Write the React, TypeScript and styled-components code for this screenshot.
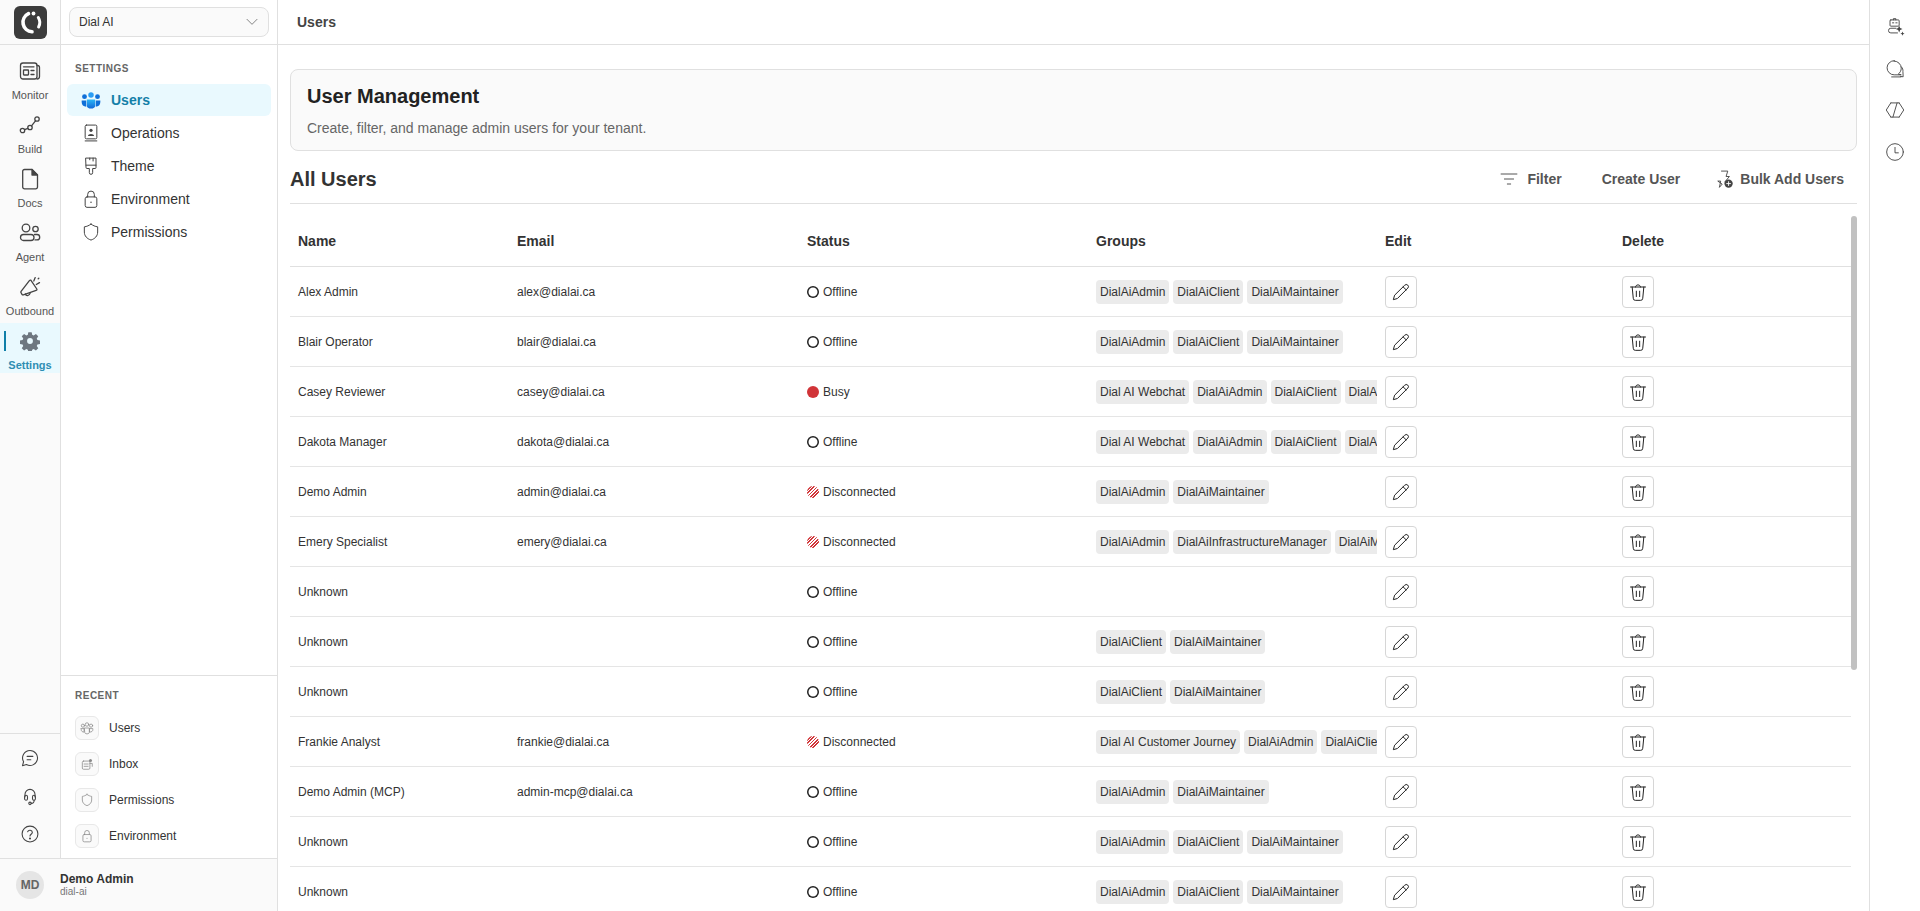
import React from 'react';
import styled, { createGlobalStyle } from 'styled-components';

const GlobalStyle = createGlobalStyle`
  html, body, #root {
    height: 100%;
  }
  body {
    margin: 0;
    overflow: hidden;
    background: #fff;
    color: #333;
    font-family: "Liberation Sans", Arial, sans-serif;
  }
  * {
    box-sizing: border-box;
  }
`;

type Status = 'Offline' | 'Busy' | 'Disconnected';
type User = { name: string; email: string; status: Status; groups: string[] };

const ADMIN = 'DialAiAdmin';
const CLIENT = 'DialAiClient';
const MAINT = 'DialAiMaintainer';
const WEBCHAT = 'Dial AI Webchat';

const users: User[] = [
  { name: 'Alex Admin', email: 'alex@dialai.ca', status: 'Offline', groups: [ADMIN, CLIENT, MAINT] },
  { name: 'Blair Operator', email: 'blair@dialai.ca', status: 'Offline', groups: [ADMIN, CLIENT, MAINT] },
  { name: 'Casey Reviewer', email: 'casey@dialai.ca', status: 'Busy', groups: [WEBCHAT, ADMIN, CLIENT, MAINT] },
  { name: 'Dakota Manager', email: 'dakota@dialai.ca', status: 'Offline', groups: [WEBCHAT, ADMIN, CLIENT, MAINT] },
  { name: 'Demo Admin', email: 'admin@dialai.ca', status: 'Disconnected', groups: [ADMIN, MAINT] },
  { name: 'Emery Specialist', email: 'emery@dialai.ca', status: 'Disconnected', groups: [ADMIN, 'DialAiInfrastructureManager', MAINT] },
  { name: 'Unknown', email: '', status: 'Offline', groups: [] },
  { name: 'Unknown', email: '', status: 'Offline', groups: [CLIENT, MAINT] },
  { name: 'Unknown', email: '', status: 'Offline', groups: [CLIENT, MAINT] },
  { name: 'Frankie Analyst', email: 'frankie@dialai.ca', status: 'Disconnected', groups: ['Dial AI Customer Journey', ADMIN, CLIENT, MAINT] },
  { name: 'Demo Admin (MCP)', email: 'admin-mcp@dialai.ca', status: 'Offline', groups: [ADMIN, MAINT] },
  { name: 'Unknown', email: '', status: 'Offline', groups: [ADMIN, CLIENT, MAINT] },
  { name: 'Unknown', email: '', status: 'Offline', groups: [ADMIN, CLIENT, MAINT] },
];

const Glyph = styled.svg<{ $size?: number }>`
  width: ${(p) => p.$size ?? 24}px;
  height: ${(p) => p.$size ?? 24}px;
  flex-shrink: 0;
  fill: none;
  stroke: currentColor;
  stroke-width: 1.3;
  stroke-linecap: round;
  stroke-linejoin: round;
`;

type IconProps = { size?: number };
const make = (body: React.ReactNode) => ({ size }: IconProps) => (
  <Glyph $size={size} viewBox="0 0 24 24">
    {body}
  </Glyph>
);

const MonitorIcon = make(
  <>
    <rect x="2.5" y="4" width="16.5" height="16" rx="2.5" />
    <path d="M19 6.5h.5a2 2 0 0 1 2 2v9a2.5 2.5 0 0 1-2.5 2.5" />
    <path d="M5.5 7.8h10.5M13 11.5h3M13 15.5h3" />
    <rect x="5.5" y="11" width="5" height="5" rx=".5" />
  </>
);
const BuildIcon = make(
  <>
    <circle cx="4.5" cy="17.5" r="2.2" />
    <circle cx="12" cy="14.5" r="2.2" />
    <circle cx="19" cy="6" r="2.2" />
    <path d="M6.6 16.7l3.3-1.4M13.5 12.8l4-5" />
  </>
);
const DocsIcon = make(
  <>
    <path d="M6.5 2.5h7.5l5.5 5.5v12a1.8 1.8 0 0 1-1.8 1.8H6.5A1.8 1.8 0 0 1 4.7 20V4.3a1.8 1.8 0 0 1 1.8-1.8z" />
    <path d="M14 2.5V8h5.5z" fill="currentColor" />
  </>
);
const AgentIcon = make(
  <>
    <circle cx="8" cy="7" r="3.8" />
    <circle cx="17.5" cy="8" r="2.7" />
    <rect x="2.5" y="13.5" width="13.5" height="6" rx="3" />
    <path d="M16.5 13.5H19a2.6 2.6 0 0 1 0 5.4h-2" />
  </>
);
const OutboundIcon = make(
  <>
    <path d="M12.8 5.2l6 8.8c.4.7 0 1.3-.7 1.3L5.4 19.8c-.6.2-1.1 0-1.4-.5l-1-1.6c-.3-.5-.2-1 .1-1.4l8.3-10.7c.5-.6 1-.6 1.4-.4z" />
    <path d="M7.5 18.8c.3 2.3 3.8 2.6 4.8-.9" />
    <path d="M15.8 6l1.4-3.4M18.3 9.500l3.200-1.900M20.200 3.800l.6-.6" />
  </>
);
const GearIcon = ({ size }: IconProps) => (
  <Glyph $size={size} viewBox="0 0 24 24" style={{ stroke: 'none' }}>
    <path
      fill="#6e7780"
      fillRule="evenodd"
      d="M10 1.5h4l.6 3.1 1.8.8 2.7-1.8 2.800 2.800-1.800 2.700.8 1.800 3.100.6v4l-3.100.6-.8 1.800 1.800 2.700-2.800 2.800-2.700-1.800-1.800.8-.6 3.100h-4l-.6-3.100-1.800-.8-2.700 1.800-2.800-2.800 1.800-2.700-.8-1.800-3.100-.6v-4l3.100-.6.8-1.800-1.800-2.700 2.800-2.800 2.700 1.800 1.800-.8zM12 8.500a3.500 3.500 0 1 0 0 7 3.500 3.500 0 0 0 0-7z"
    />
  </Glyph>
);
const UsersColorIcon = ({ size }: IconProps) => (
  <Glyph $size={size} viewBox="0 0 24 24" style={{ stroke: 'none' }}>
    <defs>
      <linearGradient id="users-body" x1="0" y1="0" x2="0" y2="1">
        <stop offset="0" stopColor="#2ab6f6" />
        <stop offset="1" stopColor="#1167d8" />
      </linearGradient>
    </defs>
    <circle cx="4.2" cy="8" r="2.9" fill="#0f6fd8" />
    <circle cx="19.8" cy="8" r="2.9" fill="#0f6fd8" />
    <circle cx="12" cy="6" r="3.3" fill="#2a9df4" />
    <path d="M.8 12.5h5.500v7.500c-3.300 0-5.500-2-5.500-5.500zM17.700 12.500h5.500v2c0 3.500-2.200 5.500-5.500 5.500z" fill="#0f6fd8" />
    <path d="M7 11.500h10v7c0 2.500-2 3.800-5 3.800s-5-1.300-5-3.800z" fill="url(#users-body)" />
  </Glyph>
);
const OperationsIcon = make(
  <>
    <rect x="5" y="2.5" width="14" height="16.5" rx="1.5" />
    <path d="M5 21.5h14" />
    <circle cx="12" cy="8.8" r="1.9" fill="currentColor" stroke="none" />
    <path d="M8.3 15.5c0-3.200 7.400-3.200 7.400 0z" fill="currentColor" stroke="none" />
  </>
);
const ThemeIcon = make(
  <>
    <path d="M6 2.5h12v11.500a1 1 0 0 1-1 1h-3v5a2 2 0 0 1-4 0v-5H7a1 1 0 0 1-1-1z" />
    <path d="M6 11h12M14.500 2.500v3.500M10.500 2.500v2" />
  </>
);
const LockIcon = make(
  <>
    <rect x="5" y="9.5" width="14" height="12.5" rx="2.2" />
    <path d="M8 9.500V6.500a4 4 0 0 1 8 0v3" />
    <circle cx="12" cy="15.8" r=".9" fill="currentColor" stroke="none" />
  </>
);
const ShieldIcon = make(
  <path d="M12 2.500c2.400 1.800 5 2.900 8 3.300v6.200c0 4.800-3.200 8-8 9.700-4.800-1.700-8-4.900-8-9.700V5.800c3-.4 5.600-1.500 8-3.300z" />
);
const ChatIcon = make(
  <>
    <path d="M12 3a9 9 0 1 1-4.300 16.900L3 21.200l1.300-4.700A9 9 0 0 1 12 3z" />
    <path d="M8.500 10h7M8.500 14h4.500" />
  </>
);
const HeadsetIcon = make(
  <>
    <path d="M6 13v-3a6 6 0 0 1 12 0v3" />
    <rect x="5.5" y="11" width="3.5" height="6" rx="1.75" />
    <rect x="15" y="11" width="3.5" height="6" rx="1.75" />
    <path d="M17 17c0 2.500-1.500 3.800-3.500 3.800" />
    <circle cx="12" cy="20.8" r="1.5" />
  </>
);
const HelpIcon = make(
  <>
    <circle cx="12" cy="12" r="9.5" />
    <path d="M9.200 9.300a2.900 2.900 0 0 1 5.600.8c0 1.900-2.800 2.400-2.800 4.200" />
    <circle cx="12" cy="17.3" r=".6" fill="currentColor" />
  </>
);
const PeopleIcon = make(
  <>
    <circle cx="5" cy="8" r="2.7" />
    <circle cx="19" cy="8" r="2.7" />
    <circle cx="12" cy="6" r="3" />
    <path d="M2 13h5v6c-3 0-5-1.500-5-4zM17 13h5v2c0 2.500-2 4-5 4zM8 12h8v7c0 2-1.500 3-4 3s-4-1-4-3z" />
  </>
);
const InboxIcon = make(
  <>
    <rect x="4" y="7" width="13" height="14" rx="2" />
    <path d="M7 12h7M7 16h7" />
    <circle cx="18" cy="6" r="2.6" fill="currentColor" stroke="none" />
    <path d="M17 11h4v5" />
  </>
);
const ChevronIcon = make(<path d="M4.500 8l7.500 7.500L19.500 8" />);
const FilterIcon = make(<path d="M2.500 6h19M6.500 12h11M10 18h4" />);
const BulkIcon = make(
  <>
    <path d="M9 2.500h7.500l-2 6.500h4L13 15.500M9.500 18.500L6.500 22 8 14.500H5z" />
    <circle cx="17.500" cy="17.500" r="5" fill="currentColor" stroke="none" />
    <path d="M17.500 15.200v4.600M15.200 17.500h4.600" stroke="#fff" />
  </>
);
const PencilIcon = make(
  <>
    <path d="M16.500 3.800a2.300 2.300 0 0 1 3.700 3.500L7.700 19.800 2.800 21.200l1.400-4.900z" />
    <path d="M14.500 5.800l3.700 3.600" />
  </>
);
const TrashIcon = make(
  <>
    <path d="M3 6h18M9 6c0-3.500 6-3.500 6 0" />
    <path d="M5 6l1.300 13.500A2.500 2.500 0 0 0 8.800 22h6.400a2.500 2.500 0 0 0 2.500-2.500L19 6" />
    <path d="M10 11v6.500M14 11v6.500" />
  </>
);
const BotSparkIcon = make(
  <>
    <rect x="6" y="3.5" width="11" height="7.5" rx="1" />
    <path d="M10 3.500V2h3v1.500M9 7h1.500M13 7h1.500" />
    <path d="M13 13.500H7a2.800 2.800 0 0 0 0 5.600h8" />
    <path d="M17 10.500l1.200 2.800 2.800 1.200-2.800 1.200-1.200 2.800-1.200-2.800-2.800-1.200 2.800-1.200z" fill="currentColor" stroke="none" />
    <path d="M21 17.500l.7 1.800 1.800.7-1.800.7-.7 1.800-.7-1.800-1.800-.7 1.800-.7z" fill="currentColor" stroke="none" />
  </>
);
const ChatsIcon = make(
  <>
    <path d="M11 2.500a8.500 8.500 0 0 1 8.500 8.500c0 3-1.500 5.500-3.500 7l3.500 1H11a8.500 8.500 0 0 1 0-17z" />
    <path d="M19.800 9.500c1.300 1.500 2 3.500 1.700 5.500l.3 6.300-3-.3M8 21.500h11" />
  </>
);
const CodeIcon = make(
  <>
    <path d="M7 3.500l-5.500 8.500L7 20.500M17 3.500l5.500 8.500-5.500 8.500" />
    <path d="M14.500 3.500l-5 17M7 3.500h10M7 20.500h10" />
  </>
);
const ClockIcon = make(
  <>
    <circle cx="12" cy="12" r="10" />
    <path d="M12 6.500V13h4" />
  </>
);

const Logo = () => (
  <LogoMark viewBox="0 0 33 33">
    <rect width="33" height="33" rx="6" fill="#3c3c3c" />
    <path d="M14.500 7.700A9.500 9.500 0 0 0 18 25.800" stroke="#fff" strokeWidth="3.6" fill="none" strokeLinecap="round" />
    <path d="M24.300 11.500a9.500 9.500 0 0 1 .3 9.500" stroke="#fff" strokeWidth="3" fill="none" strokeLinecap="round" />
    <circle cx="19.500" cy="7.500" r="1.9" fill="#fff" />
  </LogoMark>
);

const Shell = styled.div`
  display: flex;
  height: 100vh;
`;

const LeftPanel = styled.aside`
  width: 278px;
  flex-shrink: 0;
  display: flex;
  flex-direction: column;
  border-right: 1px solid #e0e0e0;
`;

const PanelBody = styled.div`
  flex: 1;
  min-height: 0;
  display: flex;
`;

const Rail = styled.div`
  width: 61px;
  flex-shrink: 0;
  display: flex;
  flex-direction: column;
  background: #fafafa;
  border-right: 1px solid #e0e0e0;
`;

const LogoRow = styled.div`
  height: 45px;
  flex-shrink: 0;
  display: flex;
  justify-content: center;
  padding-top: 6px;
  padding-left: 1px;
  border-bottom: 1px solid #e0e0e0;
`;

const LogoMark = styled.svg`
  width: 33px;
  height: 33px;
`;

const RailNav = styled.nav`
  flex: 1;
  display: flex;
  flex-direction: column;
  gap: 4px;
  padding-top: 8px;
`;

const RailItem = styled.a<{ $active?: boolean }>`
  position: relative;
  height: 50px;
  display: flex;
  flex-direction: column;
  align-items: center;
  gap: 6px;
  padding-top: 6px;
  font-size: 11px;
  line-height: 12px;
  color: ${(p) => (p.$active ? '#2f8db3' : '#555')};
  font-weight: ${(p) => (p.$active ? 700 : 400)};
  background: ${(p) => (p.$active ? '#e9f9fe' : 'transparent')};
  ${(p) =>
    p.$active &&
    `&::before {
      content: '';
      position: absolute;
      left: 4px;
      top: 8px;
      width: 2px;
      height: 20px;
      background: #0f7fa8;
    }`}
`;

const RailIconSlot = styled.span`
  width: 24px;
  height: 24px;
  display: flex;
  align-items: center;
  justify-content: center;
  color: #444;
`;

const RailFooter = styled.div`
  height: 125px;
  flex-shrink: 0;
  display: flex;
  flex-direction: column;
  align-items: center;
  padding-top: 5px;
  border-top: 1px solid #e0e0e0;
`;

const RailTool = styled.button`
  width: 100%;
  height: 38px;
  display: flex;
  align-items: center;
  justify-content: center;
  padding: 0;
  border: 0;
  background: none;
  color: #444;
`;

const SidePanel = styled.div`
  flex: 1;
  min-width: 0;
  display: flex;
  flex-direction: column;
`;

const SelectRow = styled.div`
  height: 45px;
  flex-shrink: 0;
  padding: 7px 8px 0;
  border-bottom: 1px solid #e0e0e0;
`;

const TenantSelect = styled.div`
  height: 30px;
  display: flex;
  align-items: center;
  justify-content: space-between;
  padding: 0 8px 0 9px;
  font-size: 12px;
  color: #333;
  background: #fafafa;
  border: 1px solid #e0e0e0;
  border-radius: 8px;
  svg {
    color: #666;
    stroke-width: 1.2;
  }
`;

const SettingsNav = styled.nav`
  flex: 1;
  padding: 18px 6px 0;
`;

const SectionLabel = styled.div`
  font-size: 10px;
  line-height: 12px;
  font-weight: 700;
  letter-spacing: 0.5px;
  color: #666;
`;

const SettingsLabel = styled(SectionLabel)`
  padding-left: 8px;
  margin-bottom: 9px;
`;

const NavItem = styled.a<{ $active?: boolean }>`
  height: 32px;
  margin-bottom: 1px;
  display: flex;
  align-items: center;
  gap: 10px;
  padding-left: 14px;
  font-size: 14px;
  border-radius: 6px;
  color: ${(p) => (p.$active ? '#1480a8' : '#333')};
  font-weight: ${(p) => (p.$active ? 700 : 400)};
  background: ${(p) => (p.$active ? '#e9f9fe' : 'transparent')};
  svg {
    color: #444;
    stroke-width: 1.2;
  }
`;

const RecentSection = styled.div`
  flex-shrink: 0;
  padding: 14px 14px 4px;
  border-top: 1px solid #e0e0e0;
`;

const RecentLabel = styled(SectionLabel)`
  margin-bottom: 8px;
`;

const RecentItem = styled.a`
  height: 36px;
  display: flex;
  align-items: center;
  gap: 10px;
  font-size: 12px;
  color: #333;
`;

const RecentIconBox = styled.span`
  width: 24px;
  height: 24px;
  display: flex;
  align-items: center;
  justify-content: center;
  background: #fafafa;
  border: 1px solid #e8e8e8;
  border-radius: 6px;
  color: #8a8a8a;
`;

const UserFooter = styled.div`
  height: 53px;
  flex-shrink: 0;
  display: flex;
  align-items: center;
  gap: 16px;
  padding: 0 16px;
  background: #fafafa;
  border-top: 1px solid #e0e0e0;
`;

const Avatar = styled.span`
  width: 28px;
  height: 28px;
  display: flex;
  align-items: center;
  justify-content: center;
  border-radius: 50%;
  background: #e5e5e5;
  color: #666;
  font-size: 12px;
  font-weight: 700;
`;

const UserName = styled.div`
  font-size: 12px;
  line-height: 14px;
  font-weight: 700;
  color: #333;
`;

const UserTenant = styled.div`
  font-size: 10px;
  line-height: 12px;
  color: #777;
`;

const Main = styled.main`
  flex: 1;
  min-width: 0;
  display: flex;
  flex-direction: column;
`;

const PageHeader = styled.header`
  height: 45px;
  flex-shrink: 0;
  display: flex;
  align-items: center;
  padding-left: 19px;
  font-size: 14px;
  font-weight: 700;
  color: #444;
  border-bottom: 1px solid #e0e0e0;
`;

const Content = styled.div`
  flex: 1;
  min-height: 0;
  display: flex;
  flex-direction: column;
  padding: 24px 12px 0;
`;

const Banner = styled.section`
  flex-shrink: 0;
  padding: 14px 16px 10px;
  background: #fafafa;
  border: 1px solid #e0e0e0;
  border-radius: 8px;
`;

const BannerTitle = styled.h1`
  margin: 0 0 8px;
  font-size: 20px;
  line-height: 24px;
  font-weight: 700;
  color: #222;
`;

const BannerText = styled.p`
  margin: 0;
  font-size: 14px;
  line-height: 24px;
  color: #666;
`;

const Toolbar = styled.div`
  height: 53px;
  flex-shrink: 0;
  display: flex;
  align-items: center;
  justify-content: space-between;
  padding-top: 4px;
  margin-bottom: 12px;
  border-bottom: 1px solid #e0e0e0;
`;

const SectionTitle = styled.h2`
  margin: 0;
  font-size: 20px;
  font-weight: 700;
  color: #333;
`;

const Actions = styled.div`
  display: flex;
  gap: 16px;
  padding-right: 1px;
`;

const ActionButton = styled.button`
  height: 32px;
  display: flex;
  align-items: center;
  gap: 8px;
  padding: 0 12px;
  border: 0;
  background: none;
  font-family: inherit;
  font-size: 14px;
  font-weight: 700;
  color: #555;
  svg {
    color: #444;
    stroke-width: 1.1;
  }
`;

const BulkButton = styled(ActionButton)`
  gap: 6px;
  padding-left: 6px;
`;

const TableScroll = styled.div`
  position: relative;
  flex: 1;
  min-height: 0;
  overflow: hidden;
`;

const ScrollThumb = styled.div`
  position: absolute;
  top: 0;
  right: 0;
  width: 6px;
  height: 454px;
  background: #c1c1c1;
  border-radius: 3px;
`;

const Table = styled.table`
  width: 1561px;
  table-layout: fixed;
  border-collapse: separate;
  border-spacing: 0;
`;

const HeadCell = styled.th`
  height: 51px;
  padding: 0 8px;
  text-align: left;
  font-size: 14px;
  font-weight: 700;
  color: #333;
  border-bottom: 1px solid #e0e0e0;
`;

const Cell = styled.td`
  height: 50px;
  padding: 0 8px;
  font-size: 12px;
  color: #333;
  border-bottom: 1px solid #e5e5e5;
`;

const GroupCell = styled(Cell)`
  padding-right: 0;
`;

const StatusWrap = styled.div`
  display: flex;
  align-items: center;
  gap: 4px;
`;

const StatusDot = styled.span<{ $status: Status }>`
  width: 12px;
  height: 12px;
  flex-shrink: 0;
  border-radius: 50%;
  ${(p) => p.$status === 'Offline' && 'box-shadow: inset 0 0 0 1.5px #222;'}
  ${(p) => p.$status === 'Busy' && 'background: #d13438;'}
  ${(p) =>
    p.$status === 'Disconnected' &&
    'background: repeating-linear-gradient(135deg, #d13438 0 1.2px, #fff 1.2px 2.4px);'}
`;

const Tags = styled.div`
  display: flex;
  gap: 4px;
  overflow: hidden;
`;

const Tag = styled.span`
  flex-shrink: 0;
  height: 24px;
  display: flex;
  align-items: center;
  padding: 0 4px;
  white-space: nowrap;
  background: #ebebeb;
  border-radius: 4px;
  color: #333;
`;

const RowButton = styled.button`
  width: 32px;
  height: 32px;
  display: flex;
  align-items: center;
  justify-content: center;
  padding: 0;
  background: #fff;
  border: 1px solid #d6d6d6;
  border-radius: 4px;
  color: #222;
  svg {
    stroke-width: 1.2;
  }
`;

const RightRail = styled.aside`
  width: 51px;
  flex-shrink: 0;
  display: flex;
  flex-direction: column;
  align-items: center;
  gap: 21.5px;
  padding-top: 17px;
  border-left: 1px solid #e0e0e0;
  color: #444;
  svg {
    stroke-width: 1.1;
  }
`;

const railItems = [
  { label: 'Monitor', icon: <MonitorIcon /> },
  { label: 'Build', icon: <BuildIcon /> },
  { label: 'Docs', icon: <DocsIcon /> },
  { label: 'Agent', icon: <AgentIcon /> },
  { label: 'Outbound', icon: <OutboundIcon /> },
  { label: 'Settings', icon: <GearIcon size={20} />, active: true },
];

const settingsItems = [
  { label: 'Users', icon: <UsersColorIcon size={20} />, active: true },
  { label: 'Operations', icon: <OperationsIcon size={20} /> },
  { label: 'Theme', icon: <ThemeIcon size={20} /> },
  { label: 'Environment', icon: <LockIcon size={20} /> },
  { label: 'Permissions', icon: <ShieldIcon size={20} /> },
];

const recentItems = [
  { label: 'Users', icon: <PeopleIcon size={14} /> },
  { label: 'Inbox', icon: <InboxIcon size={14} /> },
  { label: 'Permissions', icon: <ShieldIcon size={14} /> },
  { label: 'Environment', icon: <LockIcon size={14} /> },
];

const columns = [
  { label: 'Name', width: 219 },
  { label: 'Email', width: 290 },
  { label: 'Status', width: 289 },
  { label: 'Groups', width: 289 },
  { label: 'Edit', width: 237 },
  { label: 'Delete', width: 237 },
];

export default function App() {
  return (
    <Shell>
      <GlobalStyle />
      <LeftPanel>
        <PanelBody>
          <Rail>
            <LogoRow>
              <Logo />
            </LogoRow>
            <RailNav>
              {railItems.map((item) => (
                <RailItem key={item.label} $active={item.active}>
                  <RailIconSlot>{item.icon}</RailIconSlot>
                  {item.label}
                </RailItem>
              ))}
            </RailNav>
            <RailFooter>
              <RailTool>
                <ChatIcon size={20} />
              </RailTool>
              <RailTool>
                <HeadsetIcon size={20} />
              </RailTool>
              <RailTool>
                <HelpIcon size={20} />
              </RailTool>
            </RailFooter>
          </Rail>
          <SidePanel>
            <SelectRow>
              <TenantSelect>
                Dial AI
                <ChevronIcon size={16} />
              </TenantSelect>
            </SelectRow>
            <SettingsNav>
              <SettingsLabel>SETTINGS</SettingsLabel>
              {settingsItems.map((item) => (
                <NavItem key={item.label} $active={item.active}>
                  {item.icon}
                  {item.label}
                </NavItem>
              ))}
            </SettingsNav>
            <RecentSection>
              <RecentLabel>RECENT</RecentLabel>
              {recentItems.map((item) => (
                <RecentItem key={item.label}>
                  <RecentIconBox>{item.icon}</RecentIconBox>
                  {item.label}
                </RecentItem>
              ))}
            </RecentSection>
          </SidePanel>
        </PanelBody>
        <UserFooter>
          <Avatar>MD</Avatar>
          <div>
            <UserName>Demo Admin</UserName>
            <UserTenant>dial-ai</UserTenant>
          </div>
        </UserFooter>
      </LeftPanel>

      <Main>
        <PageHeader>Users</PageHeader>
        <Content>
          <Banner>
            <BannerTitle>User Management</BannerTitle>
            <BannerText>Create, filter, and manage admin users for your tenant.</BannerText>
          </Banner>
          <Toolbar>
            <SectionTitle>All Users</SectionTitle>
            <Actions>
              <ActionButton>
                <FilterIcon size={20} />
                Filter
              </ActionButton>
              <ActionButton>Create User</ActionButton>
              <BulkButton>
                <BulkIcon size={20} />
                Bulk Add Users
              </BulkButton>
            </Actions>
          </Toolbar>
          <TableScroll>
            <Table>
              <colgroup>
                {columns.map((col) => (
                  <col key={col.label} width={col.width} />
                ))}
              </colgroup>
              <thead>
                <tr>
                  {columns.map((col) => (
                    <HeadCell key={col.label}>{col.label}</HeadCell>
                  ))}
                </tr>
              </thead>
              <tbody>
                {users.map((user, i) => (
                  <tr key={i}>
                    <Cell>{user.name}</Cell>
                    <Cell>{user.email}</Cell>
                    <Cell>
                      <StatusWrap>
                        <StatusDot $status={user.status} />
                        {user.status}
                      </StatusWrap>
                    </Cell>
                    <GroupCell>
                      <Tags>
                        {user.groups.map((group) => (
                          <Tag key={group}>{group}</Tag>
                        ))}
                      </Tags>
                    </GroupCell>
                    <Cell>
                      <RowButton>
                        <PencilIcon size={20} />
                      </RowButton>
                    </Cell>
                    <Cell>
                      <RowButton>
                        <TrashIcon size={20} />
                      </RowButton>
                    </Cell>
                  </tr>
                ))}
              </tbody>
            </Table>
            <ScrollThumb />
          </TableScroll>
        </Content>
      </Main>

      <RightRail>
        <BotSparkIcon size={20} />
        <ChatsIcon size={20} />
        <CodeIcon size={20} />
        <ClockIcon size={20} />
      </RightRail>
    </Shell>
  );
}
